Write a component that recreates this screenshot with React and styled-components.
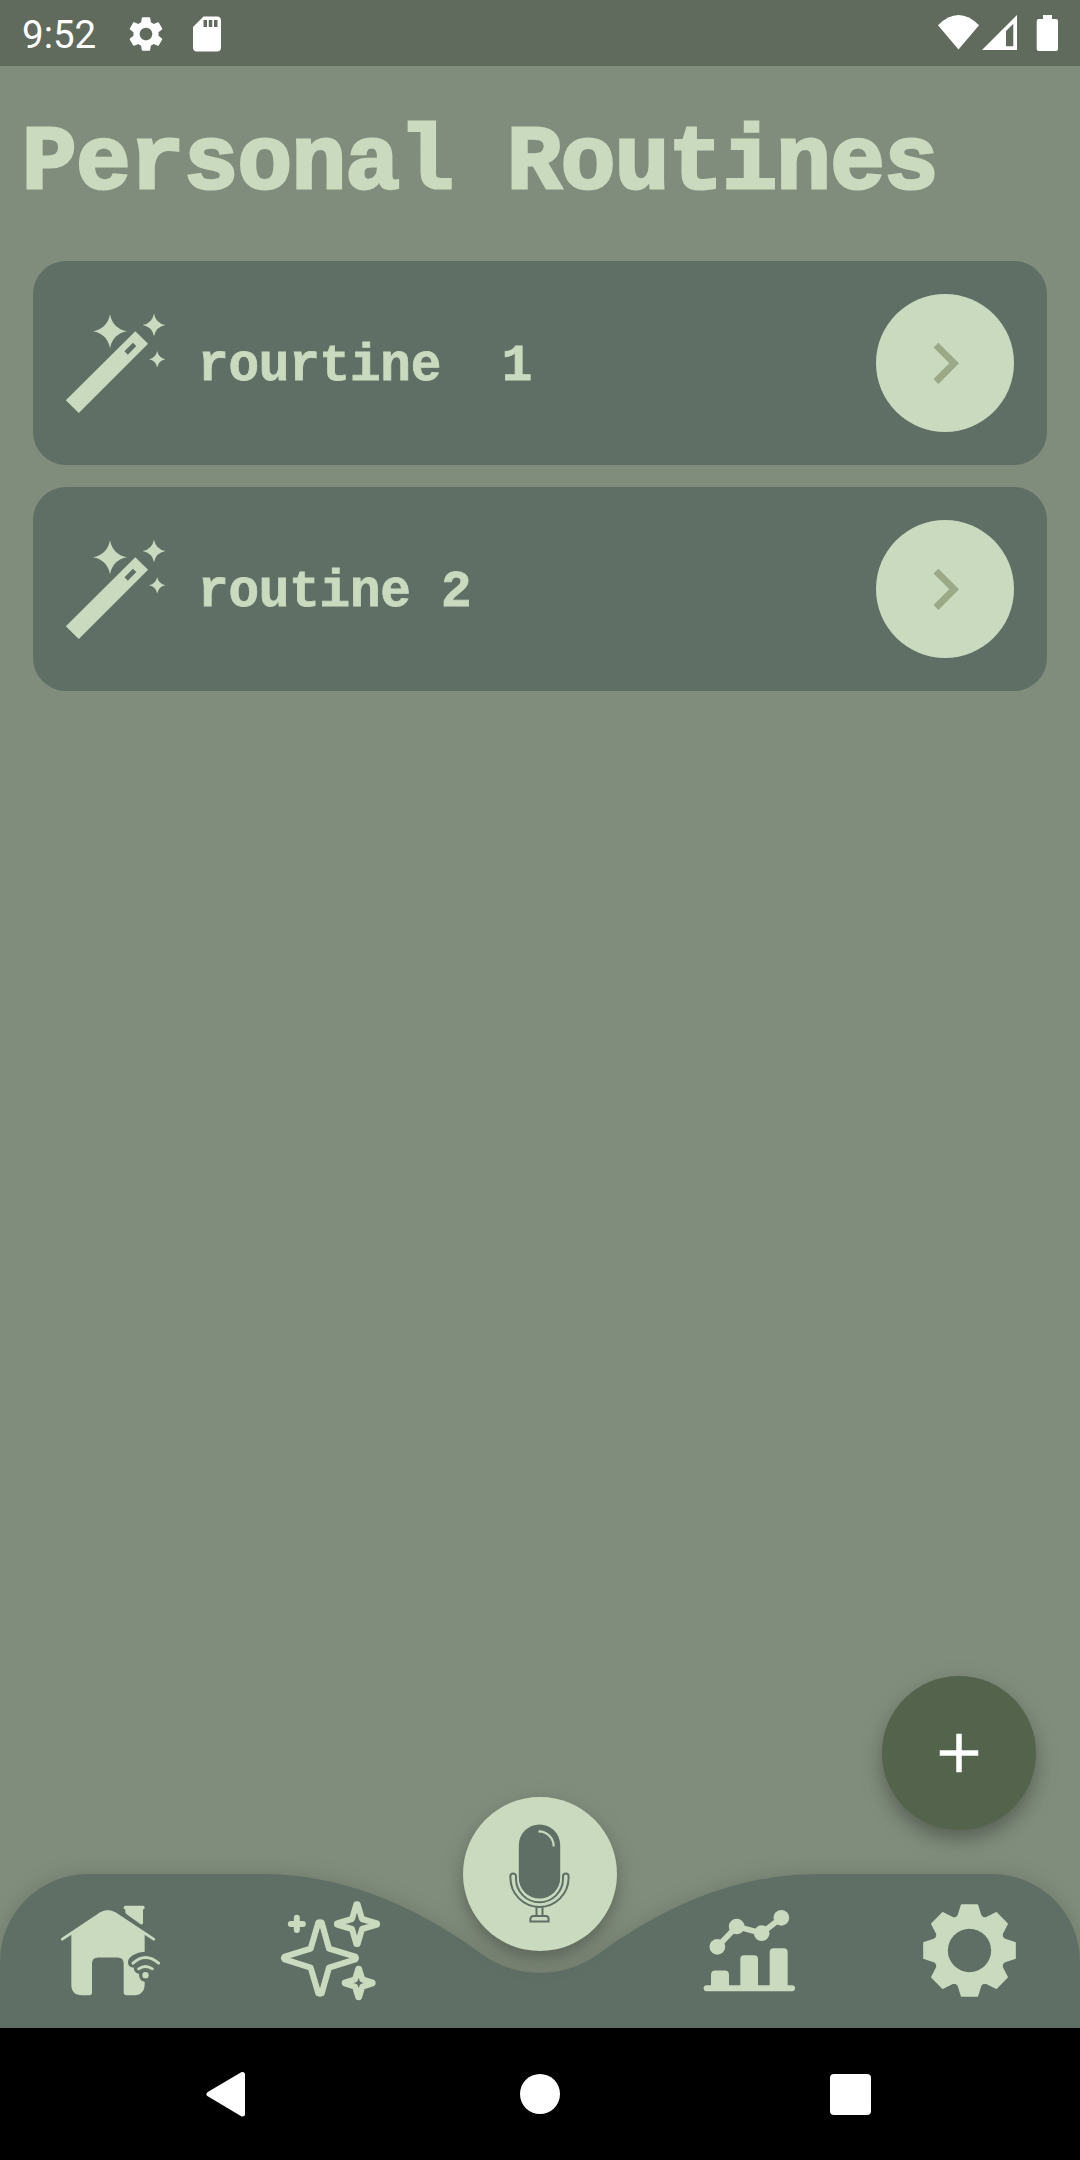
import React from "react";
import styled, { createGlobalStyle } from "styled-components";
import { MdSettings, MdSdCard, MdChevronRight, MdAdd } from "react-icons/md";

const color = {
  background: "#808d7c",
  statusBar: "#606a5d",
  surface: "#5f6f65",
  accent: "#c9dabf",
  chevron: "#9ca986",
  fab: "#53634c",
};

const GlobalStyle = createGlobalStyle`
  * { box-sizing: border-box; }
  body { margin: 0; background: ${color.background}; }
  svg { display: block; flex: none; }
  button { border: 0; padding: 0; margin: 0; }
`;

const Screen = styled.div`
  width: 1080px;
  height: 2160px;
  display: flex;
  flex-direction: column;
  overflow: hidden;
  background: ${color.background};
`;

const StatusBar = styled.header`
  height: 66px;
  flex: none;
  display: flex;
  justify-content: space-between;
  padding: 0 20px 0 22px;
  background: ${color.statusBar};
  color: #fff;
`;

const StatusGroup = styled.div`
  display: flex;
  align-items: center;
`;

const Clock = styled.span`
  width: 103px;
  font: 400 38.5px/66px Roboto, sans-serif;
  padding-top: 3px;
`;

const NoticeIcons = styled.div`
  display: flex;
  gap: 19px;
  padding-top: 1px;
`;

const Content = styled.main`
  flex: 1;
  position: relative;
  display: flex;
  flex-direction: column;
`;

const Title = styled.h1`
  margin: 0;
  height: 195px;
  padding: 42px 0 0 22px;
  font: 700 91px/112px "Liberation Mono", monospace;
  letter-spacing: -0.73px;
  -webkit-text-stroke: 3px ${color.accent};
  color: ${color.accent};
  white-space: pre;
`;

const RoutineList = styled.ul`
  list-style: none;
  margin: 0;
  padding: 0 33px;
  display: flex;
  flex-direction: column;
  gap: 22.5px;
`;

const RoutineCard = styled.li`
  height: 203.5px;
  padding: 0 33px;
  display: flex;
  align-items: center;
  border-radius: 33px;
  background: ${color.surface};
  color: ${color.accent};
`;

const RoutineName = styled.span`
  flex: 1;
  padding: 9px 0 0 33px;
  font: 700 51px/66px "Liberation Mono", monospace;
  letter-spacing: -0.22px;
  -webkit-text-stroke: 0.8px ${color.accent};
  white-space: pre;
`;

const OpenButton = styled.button`
  width: 138px;
  height: 138px;
  display: grid;
  place-items: center;
  border-radius: 50%;
  background: ${color.accent};
  color: ${color.chevron};
`;

const RoundButton = styled.button`
  position: absolute;
  width: 154px;
  height: 154px;
  display: grid;
  place-items: center;
  border-radius: 50%;
`;

const AddButton = styled(RoundButton)`
  right: 44px;
  bottom: 44px;
  background: ${color.fab};
  color: #fff;
  box-shadow: 0 10px 18px -2px rgba(0, 0, 0, 0.24), 0 8px 28px rgba(0, 0, 0, 0.12);
`;

const MicButton = styled(RoundButton)`
  left: 463px;
  top: -77px;
  padding: 0 1px 1px 0;
  background: ${color.accent};
  color: ${color.surface};
  box-shadow: 0 9px 16px -2px rgba(0, 0, 0, 0.2), 0 8px 28px rgba(0, 0, 0, 0.12);
`;

const BottomBar = styled.footer`
  position: relative;
  height: 154px;
  flex: none;
`;

const BarShadow = styled.div`
  height: 100%;
  filter: drop-shadow(0 0 10px rgba(0, 0, 0, 0.14));
`;

const Tabs = styled.nav`
  height: 100%;
  display: flex;
  justify-content: space-between;
  padding: 0 1px 1px 0;
  background: ${color.surface};
  color: ${color.accent};
  clip-path: path(
    "M0 154V88A88 88 0 0 1 88 0H262.3Q372.3 0 481.6 79.9A99 99 0 0 0 598.4 79.9Q707.7 0 817.7 0H992A88 88 0 0 1 1080 88V154Z"
  );
`;

const TabPair = styled.div`
  display: flex;
`;

const Tab = styled.button`
  width: 220px;
  display: grid;
  place-items: center;
  background: none;
  color: inherit;
`;

const SystemNav = styled.div`
  height: 132px;
  flex: none;
  display: flex;
  align-items: center;
  justify-content: center;
  background: #000;
  color: #fff;
`;

const SystemKey = styled.div`
  width: 310px;
  display: grid;
  place-items: center;
`;

const HomeKey = styled.div`
  width: 40px;
  height: 40px;
  border-radius: 50%;
  background: #fff;
`;

const RecentsKey = styled.div`
  width: 41px;
  height: 41px;
  border-radius: 4px;
  background: #fff;
`;

const star = (x, y, r) => {
  const c = r * 0.16;
  return `M${x} ${y - r}Q${x + c} ${y - c} ${x + r} ${y}Q${x + c} ${y + c} ${x} ${y + r}Q${x - c} ${y + c} ${x - r} ${y}Q${x - c} ${y - c} ${x} ${y - r}Z`;
};

const Wand = styled.svg`
  margin-top: 2px;
`;

const WandIcon = () => (
  <Wand width="99" height="99" viewBox="0 0 99 99" fill="currentColor" overflow="visible">
    <path
      fillRule="evenodd"
      d="M69.3 17.3L82.1 29.7L12.8 99L-.2 86.3ZM66.9 28.7L58.5 37.3L61.8 40.7L70.3 32Z"
    />
    <path d={star(44, 17.3, 17)} />
    <path d={star(88, 11, 11.3)} />
    <path d={star(91.2, 45.3, 8.2)} />
  </Wand>
);

const StatusIcons = () => (
  <svg width="124" height="66" viewBox="936 0 124 66" fill="#fff">
    <path d="M938 25.2Q958.5 5 979 25.2L958.5 49.5Z" />
    <path fillRule="evenodd" d="M982 50H1017V15ZM1006 31L1013.3 23.7V46.3H1006Z" />
    <path d="M1043 15H1052V19H1056A2 2 0 0 1 1058 21V49A2 2 0 0 1 1056 51H1038.700A2 2 0 0 1 1036.700 49V21A2 2 0 0 1 1038.700 19H1043Z" />
  </svg>
);

const MicIcon = () => (
  <svg width="99" height="99" viewBox="0 0 99 99" fill="none" stroke="currentColor" strokeWidth="2">
    <rect x="28.8" y=".5" width="41.400" height="74" rx="20.7" fill="currentColor" stroke="none" />
    <path d="M48.500 7.300A15 15 0 0 1 63.700 22.500" stroke={color.accent} strokeWidth="2.2" />
    <path d="M20.400 52.200A2.800 2.800 0 0 1 26 52.200V54.800A23.500 23.500 0 0 0 73 54.800V52.200A2.800 2.800 0 0 1 78.600 52.200V53.800A29.100 29.100 0 0 1 20.400 53.800Z" />
    <path d="M46.500 83V92M52.500 83V92" />
    <path d="M40.400 97.500V95A2.900 2.900 0 0 1 43.300 92.100H55.700A2.900 2.900 0 0 1 58.600 95V97.500Z" />
  </svg>
);

const HouseIcon = () => (
  <svg width="99" height="99" viewBox="183 124.5 297 297" fill="currentColor">
    <path d="M214 222L300 160Q323 146 347 160L434 218V277C403 280 384 293 384 308C384 319 392 324 401 324C402 336 408 342 417 343C417 358 424 366 434 367V375C434 395 422 407 405 407H380Q371 407 371 399V312Q371 294 353 294H294Q276 294 276 312V399Q276 407 268 407H246Q214 407 214 375Z" />
    <path d="M376 138.500H430Q434 138.500 434 144Q434 150 429 150V190Q429 198 422 194L385 168Q376 162 376 158V150Q371 150 371 144Q371 138.500 376 138.500Z" />
    <g fill="none" stroke="currentColor" strokeLinecap="round" strokeWidth="8.500">
      <path d="M187 239L303 162Q323 151 344 162L461 239" />
      <path d="M399 311Q436 277 476 311M416 328Q436 314 457 328" />
    </g>
    <circle cx="436.500" cy="347" r="9.500" />
  </svg>
);

const SparklesIcon = () => (
  <svg
    width="99"
    height="99"
    viewBox="843 125 297 297"
    fill="none"
    stroke="currentColor"
    strokeWidth="18"
    strokeLinejoin="round"
    strokeLinecap="round"
    overflow="visible"
  >
    <path d="M955 189Q960 188 965 189L987 268L1066 292Q1070 296 1066 300L987 325L965 402Q960 404 955 402L932 325L854 300Q850 296 854 292L932 268Z" />
    <path d="M1069 135H1073L1086 179L1131 192V196L1086 209L1073 254H1069L1056 209L1011 196V192L1056 179Z" />
    <path d="M1075 328H1077L1087 360L1118 370V372L1087 382L1077 414H1075L1065 382L1034 372V370L1065 360Z" />
    <path d="M872.500 194H908.500M890.500 175V212" />
  </svg>
);

const ChartIcon = () => (
  <svg width="99" height="99" viewBox="60 124.5 297 297" fill="currentColor">
    <rect x="71" y="377" width="274" height="18.500" rx="9" />
    <path d="M93 386V346Q93 333 106 333H134Q147 333 147 346V386ZM181 386V298Q181 287 192 287H223Q234 287 234 298V386ZM269 386V278Q269 266 281 266H311Q323 266 323 278V386Z" />
    <path d="M112 262L170 201L245 221L304 175" fill="none" stroke="currentColor" strokeWidth="17" />
    <circle cx="112" cy="262" r="23.500" />
    <circle cx="170" cy="201" r="23.500" />
    <circle cx="245" cy="221" r="23.500" />
    <circle cx="304" cy="175" r="23.500" />
  </svg>
);

const tooth = [[-41, -97], [-33, -104], [-23, -136], [23, -136], [33, -104], [41, -97]];
const gearPoints = Array.from({ length: 8 }, (_, i) => {
  const a = (i * Math.PI) / 4;
  return tooth
    .map(([x, y]) => [x * Math.cos(a) - y * Math.sin(a), x * Math.sin(a) + y * Math.cos(a)])
    .map((p) => p.map((n) => n.toFixed(1)).join(" "))
    .join("L");
}).join("L");

const GearIcon = () => (
  <svg width="99" height="99" viewBox="-148.5 -148.5 297 297">
    <path
      d={`M${gearPoints}Z`}
      fill="currentColor"
      stroke="currentColor"
      strokeWidth="6"
      strokeLinejoin="round"
    />
    <circle r="65" fill={color.surface} />
  </svg>
);

const BackIcon = () => (
  <svg width="48" height="48" viewBox="0 0 48 48">
    <path d="M3 24.200L36.500 4.500V44Z" fill="#fff" stroke="#fff" strokeWidth="5" strokeLinejoin="round" />
  </svg>
);

const routines = ["rourtine  1", "routine 2"];

export default function App() {
  return (
    <Screen>
      <GlobalStyle />
      <StatusBar>
        <StatusGroup>
          <Clock>9:52</Clock>
          <NoticeIcons>
            <MdSettings size={42} />
            <MdSdCard size={42} />
          </NoticeIcons>
        </StatusGroup>
        <StatusIcons />
      </StatusBar>
      <Content>
        <Title>Personal Routines</Title>
        <RoutineList>
          {routines.map((name) => (
            <RoutineCard key={name}>
              <WandIcon />
              <RoutineName>{name}</RoutineName>
              <OpenButton aria-label="Open">
                <MdChevronRight size={82.5} />
              </OpenButton>
            </RoutineCard>
          ))}
        </RoutineList>
        <AddButton aria-label="Add">
          <MdAdd size={66} />
        </AddButton>
      </Content>
      <BottomBar>
        <BarShadow>
          <Tabs>
            <TabPair>
              <Tab aria-label="Home"><HouseIcon /></Tab>
              <Tab aria-label="Routines"><SparklesIcon /></Tab>
            </TabPair>
            <TabPair>
              <Tab aria-label="Statistics"><ChartIcon /></Tab>
              <Tab aria-label="Settings"><GearIcon /></Tab>
            </TabPair>
          </Tabs>
        </BarShadow>
        <MicButton aria-label="Speak"><MicIcon /></MicButton>
      </BottomBar>
      <SystemNav>
        <SystemKey><BackIcon /></SystemKey>
        <SystemKey><HomeKey /></SystemKey>
        <SystemKey><RecentsKey /></SystemKey>
      </SystemNav>
    </Screen>
  );
}
